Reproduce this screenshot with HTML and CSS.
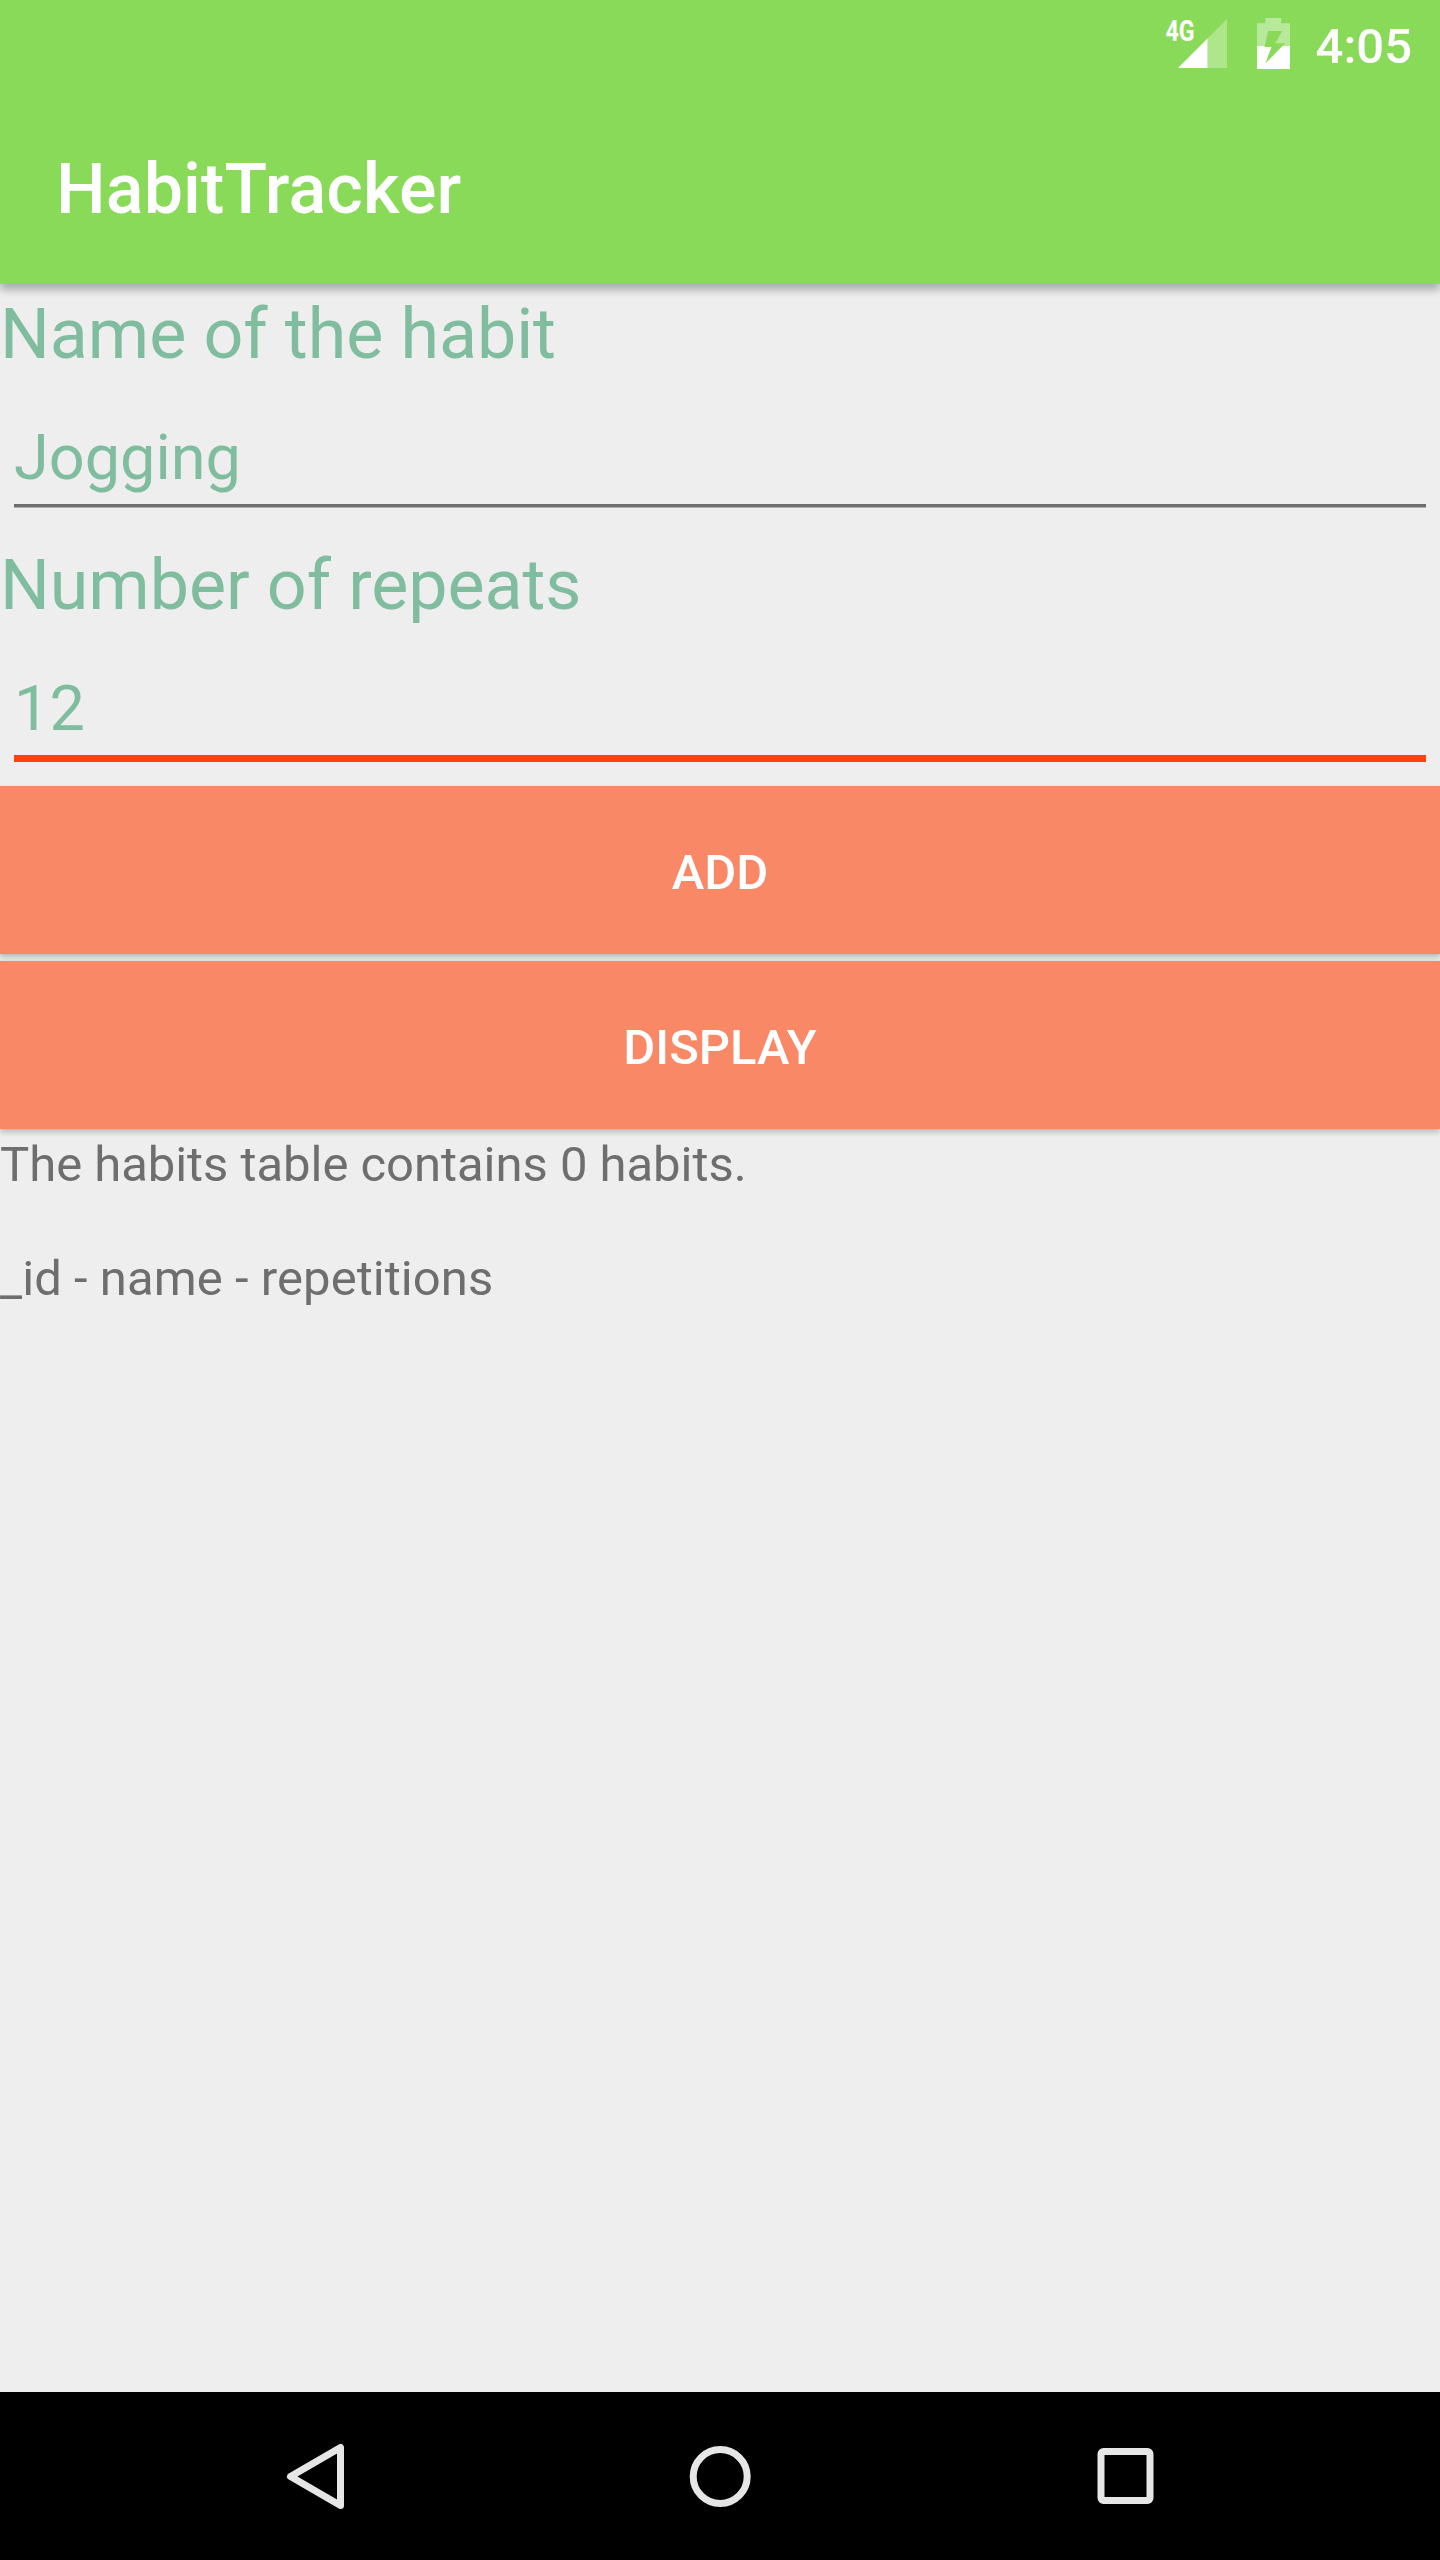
FILE: index.html
```html
<!DOCTYPE html>
<html lang="en">
<head>
<meta charset="utf-8">
<title>HabitTracker</title>
<link rel="stylesheet" href="styles.css">
</head>
<body>
<div class="screen">
  <header class="app-bar">
    <div class="status-bar">
      <svg class="status-icons" width="130" height="84" viewBox="1165 0 130 84" aria-hidden="true">
        <text class="network" transform="translate(1165.5 41) scale(.79 1)">4G</text>
        <path d="M1227 19V68H1207.5V38.5z" fill="#ade68b"/>
        <path d="M1207.5 38.5V68H1178z" fill="#fff"/>
        <path d="M1265.3 18h15.9v5.3h8.8V46h-33V23.3h8.3z" fill="#b8e99b"/>
        <path d="M1257 46h33v23h-33z" fill="#fff"/>
        <path d="M1268.2 31h14.1l-7 12.3h9.9l-19.7 20 6-16.3h-7z" fill="#89da59"/>
      </svg>
      <span class="clock">4:05</span>
    </div>
    <h1 class="title">HabitTracker</h1>
  </header>
  <main class="content">
    <div class="field">
      <div class="label">Name of the habit</div>
      <div class="input">Jogging</div>
    </div>
    <div class="field">
      <div class="label">Number of repeats</div>
      <div class="input focused">12</div>
    </div>
    <div class="actions">
      <button class="button">ADD</button>
      <button class="button">DISPLAY</button>
    </div>
    <div class="report">
      <p class="summary">The habits table contains 0 habits.</p>
      <p class="columns">_id - name - repetitions</p>
    </div>
  </main>
  <nav class="nav-bar">
    <svg width="1440" height="168" viewBox="0 0 1440 168" fill="none" stroke="#e6e6e6" stroke-width="7" aria-hidden="true">
      <path d="M290.5 84.5l50-29v58z" stroke-linejoin="round"/>
      <circle cx="720.2" cy="84.5" r="27"/>
      <rect x="1101" y="59.5" width="49" height="49" rx="2.5"/>
    </svg>
  </nav>
</div>
</body>
</html>
```
FILE: styles.css
```css
* { box-sizing: border-box; }

body {
  margin: 0;
  background: #eee;
  font-family: Roboto, sans-serif;
}

.screen {
  display: flex;
  flex-direction: column;
  width: 1440px;
  height: 2560px;
}

.app-bar {
  height: 284px;
  background: #89da59;
  color: #fff;
  box-shadow: 0 6px 8px rgba(0, 0, 0, .28);
}

.status-bar {
  display: flex;
  justify-content: flex-end;
  gap: 21px;
  height: 84px;
  padding-right: 28px;
}

.network {
  font-size: 29.5px;
  font-weight: 700;
  fill: #fff;
}

.clock {
  font-size: 49px;
  font-weight: 500;
  line-height: 94px;
}

.title {
  margin: 0;
  padding: 55px 0 0 56px;
  font-size: 70px;
  font-weight: 500;
  line-height: 100px;
  letter-spacing: .12px;
}

.content { flex: 1; }

.field { height: 251px; }

.label {
  height: 100px;
  font-size: 70px;
  line-height: 100px;
  letter-spacing: -.08px;
  color: #80bd9e;
}

.input {
  height: 123px;
  margin: 0 14px;
  padding-top: 37px;
  border-bottom: 3px solid #6e6e6e;
  font-size: 63px;
  line-height: 74px;
  color: #80bd9e;
  box-shadow: 0 1px #b0b0b0;
}

.input.focused {
  height: 127px;
  border-bottom: 7px solid #ff420e;
  box-shadow: none;
}

.actions {
  display: flex;
  flex-direction: column;
  gap: 7px;
}

.button {
  height: 168px;
  padding: 5px 0 0;
  border: 0;
  background: #f98866;
  box-shadow: 0 4px 5px rgba(0, 0, 0, .18), 0 0 2px rgba(0, 0, 0, .1);
  font: 500 49px/58px Roboto, sans-serif;
  color: #fff;
}

.report {
  padding-top: 7px;
  font-size: 49px;
  line-height: 57px;
  color: #6e6e6e;
}

.report p { margin: 0 0 57px; }

.summary { letter-spacing: -.04px; }

.columns { letter-spacing: .06px; }

.nav-bar {
  height: 168px;
  background: #000;
}

.nav-bar svg { display: block; }
```
